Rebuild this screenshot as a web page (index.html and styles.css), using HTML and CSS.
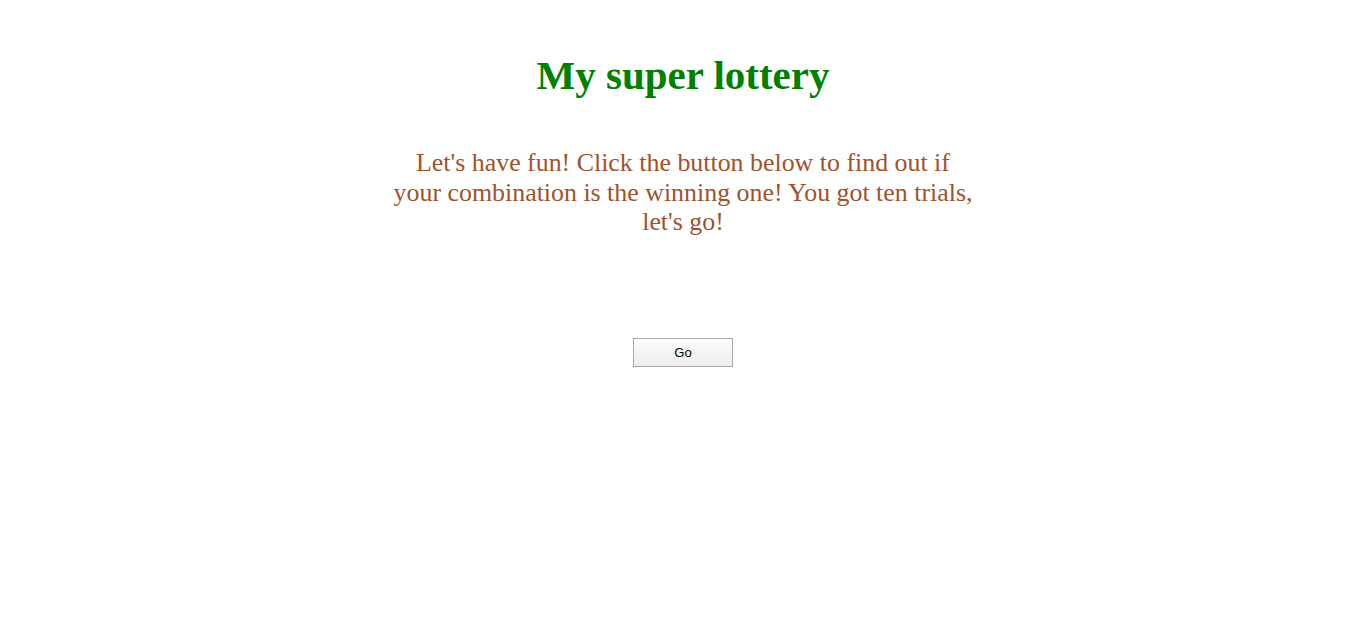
FILE: index.html
```html
<!DOCTYPE html>
<html>
<head>
<meta charset="utf-8">
<link rel="stylesheet" href="styles.css">
</head>
<body>
<main class="page">
  <h1 class="title">My super lottery</h1>
  <p class="intro">Let's have fun! Click the button below to find out if your combination is the winning one! You got ten trials, let's go!</p>
  <button class="go">Go</button>
</main>
</body>
</html>
```
FILE: styles.css
```css
html, body { margin: 0; padding: 0; background: #fff; }
.page {
  display: flex;
  flex-direction: column;
  align-items: center;
  font-family: "Liberation Serif", "Times New Roman", serif;
  padding-top: 52px;
}
.title {
  margin: 0;
  color: #008000;
  font-size: 41px;
  font-weight: bold;
  line-height: 46px;
}
.intro {
  margin: 50px 0 0;
  width: 582px;
  text-align: center;
  color: #a0522d;
  font-size: 25.9px;
  line-height: 29.5px;
}
.go {
  margin-top: 101px;
  width: 100px;
  height: 29px;
  font-family: "Liberation Sans", Arial, sans-serif;
  font-size: 13px;
  color: #000;
  border: 1px solid #a9a9a9;
  border-radius: 0;
  background: linear-gradient(#fdfdfd, #ececec);
  padding: 0;
}
```
